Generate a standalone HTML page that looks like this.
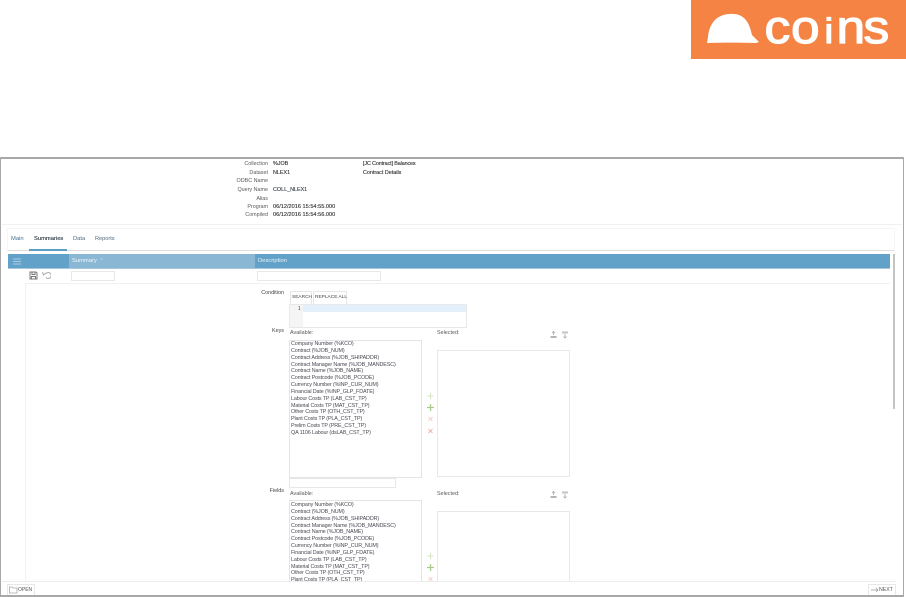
<!DOCTYPE html>
<html><head><meta charset="utf-8">
<style>
html,body{margin:0;padding:0;background:#fff;}
body{width:906px;height:597px;position:relative;overflow:hidden;font-family:"Liberation Sans",sans-serif;font-size:5.4px;color:#5a5a5a;}
.a{position:absolute;white-space:nowrap;line-height:7px;}
.b{position:absolute;box-sizing:border-box;}
.r{text-align:right;}
.k{color:#2f2f2f;-webkit-text-stroke:.12px #2f2f2f;}
.list{position:absolute;left:291px;white-space:nowrap;font-size:5.4px;letter-spacing:-.13px;line-height:6.85px;color:#4a4a55;}
</style></head><body>

<!-- logo -->
<svg class="b" style="left:691px;top:0" width="215" height="59" viewBox="0 0 215 59">
<rect width="215" height="59" fill="#f58344"/>
<path d="M16 43 L17 37 C18 27 22 19 31 15.500 C36 13.500 44 13.500 48 15 C56 18 59 26 61 35 L68 42 L65 43 C48 42.500 30 42.500 16 43 Z" fill="#fff"/>
<text transform="translate(0 43) scale(1.12 1)" y="0" x="65.600 89.300 119.200 129.900 154" font-family="Liberation Sans" font-size="46" fill="#fff" stroke="#fff" stroke-width="1.200">co<tspan font-size="35">i</tspan>ns</text>
</svg>

<!-- frame -->
<div class="b" style="left:0;top:157px;width:904px;height:440px;border:1.500px solid #a8a8a8;border-top-width:2px;border-bottom-width:2px;"></div>

<!-- header info -->
<div class="a r" style="left:220px;width:48px;top:161px;">Collection</div><div class="a k" style="left:273px;top:161px;">%JOB</div>
<div class="a r" style="left:220px;width:48px;top:170px;">Dataset</div><div class="a k" style="left:273px;top:170px;">NLEX1</div>
<div class="a r" style="left:220px;width:48px;top:178px;">ODBC Name</div>
<div class="a r" style="left:220px;width:48px;top:187px;">Query Name</div><div class="a k" style="left:273px;top:187px;color:#2c3e50">COLL_NLEX1</div>
<div class="a r" style="left:220px;width:48px;top:196px;">Alias</div>
<div class="a r" style="left:220px;width:48px;top:204px;">Program</div><div class="a k" style="left:273px;top:204px;font-size:5.600px;">06/12/2016 15:54:55.000</div>
<div class="a r" style="left:220px;width:48px;top:212px;">Compiled</div><div class="a k" style="left:273px;top:212px;font-size:5.600px;">06/12/2016 15:54:56.000</div>
<div class="a k" style="left:363px;top:161px;letter-spacing:-.12px;">[JC Contract] Balances</div>
<div class="a k" style="left:363px;top:170px;">Contract Details</div>
<div class="b" style="left:2px;top:224px;width:900px;height:1px;background:#f0f0f0;"></div>

<!-- tabs -->
<div class="b" style="left:7px;top:228px;width:888px;height:23px;border:1px solid #f6f6f6;border-bottom:1px solid #dedede;"></div>
<div class="a" style="left:11px;top:236px;font-size:5.800px;color:#3f6f8f;">Main</div>
<div class="a k" style="left:34px;top:236px;font-size:5.800px;color:#22384a;">Summaries</div>
<div class="a" style="left:73px;top:236px;font-size:5.800px;color:#4d6a80;">Data</div>
<div class="a" style="left:95px;top:236px;font-size:5.600px;color:#4d6a80;">Reports</div>
<div class="b" style="left:29px;top:249px;width:38px;height:2px;background:#5b9fc8;"></div>

<!-- table header -->
<div class="b" style="left:8px;top:254px;width:882px;height:15px;background:#62a1c8;border-bottom:1px solid #a5c8de;"></div>
<div class="b" style="left:68.500px;top:254px;width:186.500px;height:14px;background:#8ab7d3;"></div>
<svg class="b" style="left:13px;top:258px" width="9" height="7"><path d="M0 1H8M0 3.500H8M0 6H8" stroke="#a9cde3" stroke-width="1"/></svg>
<div class="a" style="left:72px;top:258px;color:#f2f7fa;font-size:5.800px;">Summary &nbsp;<span style="color:#c9e0ee">^</span></div>
<div class="a" style="left:258px;top:258px;color:#eaf3f8;font-size:5.800px;">Description</div>

<!-- row -->
<svg class="b" style="left:29px;top:271px" width="22" height="9" fill="none" stroke="#777" stroke-width="1">
<path d="M1 1H7L8 2V8H1Z M3 1V3.500H6V1 M2.500 8V5.500H6.500V8"/>
<path d="M14 2.500A3 3 0 1 1 14 6.500" stroke="#aaa" transform="translate(3 0)"/><path d="M13.500 1L14.500 4L17 2" stroke="#aaa"/>
</svg>
<div class="b" style="left:71px;top:271px;width:44px;height:10px;border:1px solid #e8e8e8;"></div>
<div class="b" style="left:257px;top:271px;width:124px;height:10px;border:1px solid #e8e8e8;"></div>
<div class="b" style="left:25px;top:283px;width:865px;height:1px;background:#f0f0f0;"></div>
<div class="b" style="left:25px;top:283px;width:1px;height:298px;background:#f2f2f2;"></div>

<!-- condition -->
<div class="a r" style="left:244px;width:40px;top:290px;color:#444;">Condition</div>
<div class="b" style="left:290px;top:291px;width:22px;height:13px;border:1px solid #e6e6e6;border-bottom:none;"></div>
<div class="a" style="left:292px;top:294px;font-size:4.800px;color:#444;">SEARCH</div>
<div class="b" style="left:313px;top:291px;width:34px;height:13px;border:1px solid #e6e6e6;border-bottom:none;"></div>
<div class="a" style="left:315px;top:294px;font-size:4.800px;color:#444;">REPLACE ALL</div>
<div class="b" style="left:289px;top:304px;width:178px;height:24px;border:1px solid #e8e8e8;"></div>
<div class="b" style="left:290px;top:305px;width:13px;height:22px;background:#f5f5f5;"></div>
<div class="b" style="left:303px;top:305px;width:163px;height:7px;background:#e3f0fb;"></div>
<div class="a" style="left:298px;top:306px;font-size:5px;color:#444;">1</div>

<!-- keys -->
<div class="a r" style="left:254px;width:30px;top:328px;color:#444;">Keys</div>
<div class="a" style="left:290px;top:330px;">Available:</div>
<div class="a" style="left:437px;top:330px;">Selected:</div>
<div class="b" style="left:289px;top:340px;width:133px;height:138px;border:1px solid #e4e4e4;"></div>
<div class="list" style="top:341px;">Company Number (%KCO)<br>Contract (%JOB_NUM)<br>Contract Address (%JOB_SHIPADDR)<br>Contract Manager Name (%JOB_MANDESC)<br>Contract Name (%JOB_NAME)<br>Contract Postcode (%JOB_PCODE)<br>Currency Number (%INP_CUR_NUM)<br>Financial Date (%INP_GLP_FDATE)<br>Labour Costs TP (LAB_CST_TP)<br>Material Costs TP (MAT_CST_TP)<br>Other Costs TP (OTH_CST_TP)<br>Plant Costs TP (PLA_CST_TP)<br>Prelim Costs TP (PRE_CST_TP)<br>QA 1106 Labour (dsLAB_CST_TP)</div>
<div class="b" style="left:289px;top:478px;width:107px;height:10px;border:1px solid #e8e8e8;"></div>
<div class="b" style="left:437px;top:350px;width:133px;height:127px;border:1px solid #e8e8e8;"></div>
<svg class="b" style="left:426px;top:392px" width="9" height="44" fill="none" stroke-width="1">
<path d="M4.500 1V7M1.500 4H7.500" stroke="#d8e6c4"/>
<path d="M4.500 12V19M1 15.500H8" stroke="#a8c98c" stroke-width="1.300"/>
<path d="M2.500 25L6.500 29M6.500 25L2.500 29" stroke="#f6d0cc"/>
<path d="M2.500 37L6.500 41M6.500 37L2.500 41" stroke="#f2b4ac"/>
</svg>
<svg class="b" style="left:550px;top:331px" width="19" height="8"><path d="M3.500 0V4M2 2L3.500 0.500L5 2" stroke="#aaa" fill="none" stroke-width=".8"/><rect x="0.500" y="5" width="6" height="2" fill="#b4b4b4"/><rect x="12" y="0.500" width="6" height="2" fill="#c4c4c4"/><path d="M15 3V7M13.500 5.500L15 7L16.500 5.500" stroke="#aaa" fill="none" stroke-width=".8"/></svg>

<!-- fields -->
<div class="a r" style="left:254px;width:30px;top:488px;color:#444;">Fields</div>
<div class="a" style="left:290px;top:491px;">Available:</div>
<div class="a" style="left:437px;top:491px;">Selected:</div>
<div class="b" style="left:289px;top:500px;width:133px;height:90px;border:1px solid #e4e4e4;"></div>
<div class="list" style="top:502px;">Company Number (%KCO)<br>Contract (%JOB_NUM)<br>Contract Address (%JOB_SHIPADDR)<br>Contract Manager Name (%JOB_MANDESC)<br>Contract Name (%JOB_NAME)<br>Contract Postcode (%JOB_PCODE)<br>Currency Number (%INP_CUR_NUM)<br>Financial Date (%INP_GLP_FDATE)<br>Labour Costs TP (LAB_CST_TP)<br>Material Costs TP (MAT_CST_TP)<br>Other Costs TP (OTH_CST_TP)<br>Plant Costs TP (PLA_CST_TP)</div>
<div class="b" style="left:437px;top:511px;width:133px;height:80px;border:1px solid #e8e8e8;"></div>
<svg class="b" style="left:426px;top:552px" width="9" height="30" fill="none">
<path d="M4.500 1V7M1.500 4H7.500" stroke="#d8e6c4"/>
<path d="M4.500 12V19M1 15.500H8" stroke="#a8c98c" stroke-width="1.300"/>
<path d="M2.500 25L6.500 29M6.500 25L2.500 29" stroke="#f6d0cc"/>
</svg>
<svg class="b" style="left:550px;top:491px" width="19" height="8"><path d="M3.500 0V4M2 2L3.500 0.500L5 2" stroke="#aaa" fill="none" stroke-width=".8"/><rect x="0.500" y="5" width="6" height="2" fill="#b4b4b4"/><rect x="12" y="0.500" width="6" height="2" fill="#c4c4c4"/><path d="M15 3V7M13.500 5.500L15 7L16.500 5.500" stroke="#aaa" fill="none" stroke-width=".8"/></svg>

<!-- scrollbar -->
<div class="b" style="left:893px;top:254px;width:2px;height:155px;background:#c4c4c4;"></div>

<!-- footer -->
<div class="b" style="left:2px;top:582px;width:900px;height:13px;background:#fff;"></div>
<div class="b" style="left:2px;top:581px;width:894px;height:1px;background:#ececec;"></div>
<div class="b" style="left:7px;top:584px;width:28px;height:11px;border:1px solid #e8e8e8;border-bottom:none;"></div>
<svg class="b" style="left:9px;top:586px" width="9" height="8"><path d="M.5 1H3L4 2H8V7H.5Z" fill="none" stroke="#aaa" stroke-width=".8"/></svg>
<div class="a" style="left:18px;top:587px;font-size:5px;color:#555;">OPEN</div>
<div class="b" style="left:868px;top:584px;width:28px;height:11px;border:1px solid #e8e8e8;border-bottom:none;"></div>
<svg class="b" style="left:871px;top:587px" width="8" height="6"><path d="M0 3H7M5 1L7 3L5 5" fill="none" stroke="#999" stroke-width=".7"/></svg>
<div class="a" style="left:879px;top:587px;font-size:5.200px;color:#555;">NEXT</div>

</body></html>
